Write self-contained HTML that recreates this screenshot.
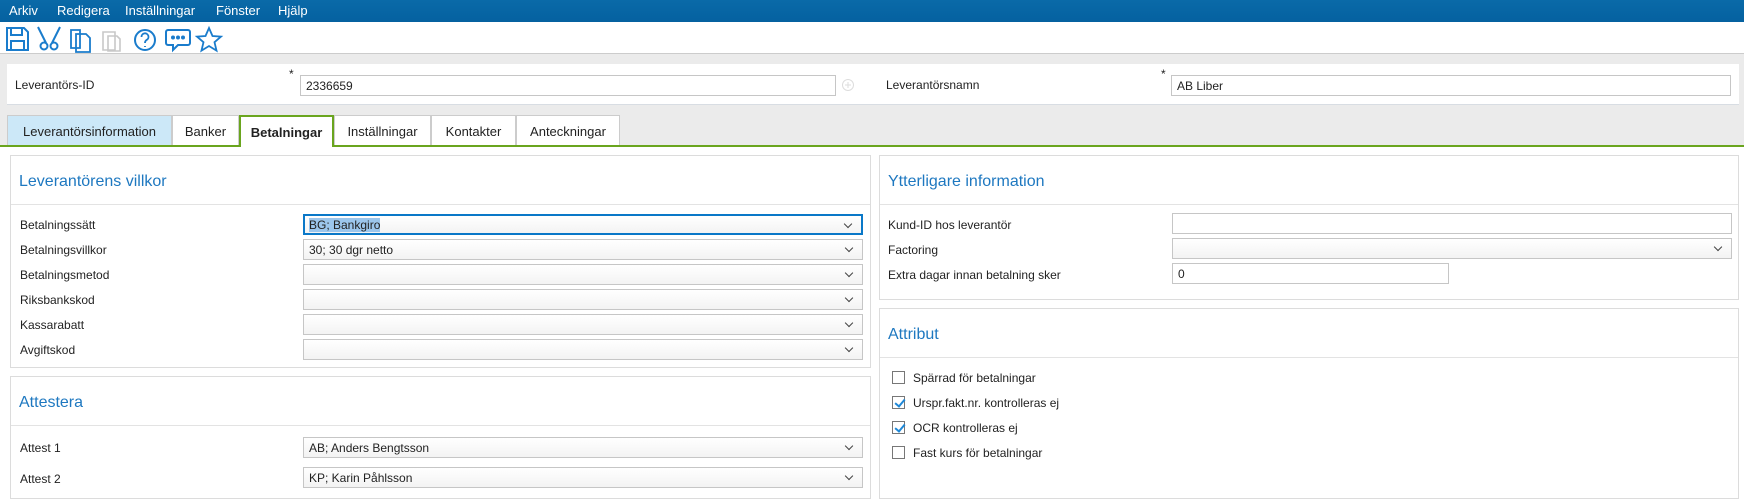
<!DOCTYPE html>
<html><head><meta charset="utf-8"><style>
*{box-sizing:border-box;margin:0;padding:0}
body{width:1744px;height:504px;overflow:hidden;background:#fff;font-family:"Liberation Sans",sans-serif;font-size:12px;color:#222;position:relative}
.a{position:absolute}
.menu{left:0;top:0;width:1744px;height:22px;background:linear-gradient(#0a6aa8,#0561a0)}
.menu span{position:absolute;top:3px;color:#fff;font-size:13px}
.tb{top:22px;left:0;width:1744px;height:32px;background:#fff;border-bottom:1px solid #ccc}
.gray{top:54px;left:0;width:1744px;height:92px;background:#ebebeb}
.hp{left:7px;top:64px;width:1732px;height:41px;background:#fff;border-bottom:1px solid #d8dde3}
.inp{position:absolute;height:21px;border:1px solid #c6c6c6;background:#fff;padding:3px 5px;font-size:12px}
.sel{position:absolute;height:21px;border:1px solid #c6c6c6;background:linear-gradient(#fff,#f3f3f3);padding:3px 5px;font-size:12px}
.sel:after{content:"";position:absolute;right:10px;top:5px;width:5px;height:5px;border-right:1.3px solid #444;border-bottom:1.3px solid #444;transform:rotate(45deg)}
.tab{position:absolute;top:115px;height:30px;border:1px solid #ccc;border-bottom:none;background:#fff;font-size:13px;padding-top:8px;text-align:center}
.panel{position:absolute;border:1px solid #dcdcdc;background:#fff}
.panel h2{position:absolute;left:8px;font-weight:normal;font-size:16px;color:#1e78c0}
.panel .div{position:absolute;left:0;right:0;height:1px;background:#e3e3e3}
.lbl{position:absolute;font-size:12px}
.cb{position:absolute;width:13px;height:13px;border:1px solid #777;background:#fff}
.cb.on:after{content:"";position:absolute;left:3.5px;top:0px;width:4px;height:8px;border-right:2px solid #1e88d8;border-bottom:2px solid #1e88d8;transform:rotate(40deg)}
</style></head><body>
<div class="a menu"><span style="left:9px">Arkiv</span><span style="left:57px">Redigera</span><span style="left:125px">Inställningar</span><span style="left:216px">Fönster</span><span style="left:278px">Hjälp</span></div>
<div class="a tb">
<svg width="240" height="32" viewBox="0 0 240 32" fill="none" stroke="#1a7ccc" stroke-width="2">
<path d="M7 6h17l4 4v18H7z"/><path d="M11 6v7h11V6M11 28v-9h13v9"/>
<circle cx="44" cy="24" r="3.5"/><circle cx="54" cy="24" r="3.5"/><path d="M46 21L38 5M52 21L60 5"/>
<path d="M71 8h9v18h-9zM76 12h10l4 4v14H76z" stroke-width="1.8"/>
<path d="M103 10h12v18h-12zM108 14h9l3 3v12h-12z" stroke="#c8c8c8" stroke-width="1.6"/>
<circle cx="145" cy="18" r="10"/><path d="M141.5 15a3.5 3.5 0 1 1 5 3c-1.5 1-1.5 2-1.5 3M145 24v1" stroke-width="1.8"/>
<path d="M168 8h20a2 2 0 0 1 2 2v11a2 2 0 0 1-2 2h-10l-5 5v-5h-5a2 2 0 0 1-2-2V10a2 2 0 0 1 2-2z"/><circle cx="173" cy="15.5" r="1" fill="#1a7ccc"/><circle cx="178" cy="15.5" r="1" fill="#1a7ccc"/><circle cx="183" cy="15.5" r="1" fill="#1a7ccc"/>
<path d="M209 6l3.5 8 8.5.6-6.5 5.6 2 8.4-7.5-4.6-7.5 4.6 2-8.4-6.5-5.6 8.5-.6z" stroke-width="1.8"/>
</svg></div>
<div class="a gray"></div>
<div class="a hp">
<div class="lbl" style="left:8px;top:14px">Leverantörs-ID</div>
<div class="lbl" style="left:282px;top:3px">*</div>
<div class="inp" style="left:293px;top:11px;width:536px">2336659</div>
<svg class="a" style="left:834px;top:14px" width="14" height="14"><circle cx="7" cy="7" r="5.5" fill="none" stroke="#ddd"/><path d="M7 4v6M4 7h6" stroke="#ddd"/></svg>
<div class="lbl" style="left:879px;top:14px">Leverantörsnamn</div>
<div class="lbl" style="left:1154px;top:3px">*</div>
<div class="inp" style="left:1164px;top:11px;width:560px">AB Liber</div>
</div>
<div class="tab" style="left:7px;width:165px;background:#cce8f8">Leverantörsinformation</div>
<div class="tab" style="left:172px;width:67px">Banker</div>
<div class="tab" style="left:239px;width:95px;border:2px solid #6aa51e;border-bottom:none;font-weight:bold;height:32px;background:#fff;z-index:2">Betalningar</div>
<div class="tab" style="left:334px;width:97px">Inställningar</div>
<div class="tab" style="left:431px;width:85px">Kontakter</div>
<div class="tab" style="left:516px;width:104px">Anteckningar</div>
<div class="a" style="left:0;top:145px;width:1744px;height:2px;background:#6aa51e"></div>
<div class="a" style="left:241px;top:145px;width:91px;height:2px;background:#fff;z-index:3"></div>

<div class="panel" style="left:10px;top:155px;width:861px;height:213px">
<h2 style="top:17px">Leverantörens villkor</h2><div class="div" style="top:48px"></div>
<div class="lbl" style="left:9px;top:62px">Betalningssätt</div>
<div class="lbl" style="left:9px;top:87px">Betalningsvillkor</div>
<div class="lbl" style="left:9px;top:112px">Betalningsmetod</div>
<div class="lbl" style="left:9px;top:137px">Riksbankskod</div>
<div class="lbl" style="left:9px;top:162px">Kassarabatt</div>
<div class="lbl" style="left:9px;top:187px">Avgiftskod</div>
<div class="sel" style="left:292px;top:58px;width:560px;border:2px solid #0a78c8;padding:2px 4px"><span style="background:#9cc6ec">BG; Bankgiro</span></div>
<div class="sel" style="left:292px;top:83px;width:560px">30; 30 dgr netto</div>
<div class="sel" style="left:292px;top:108px;width:560px"></div>
<div class="sel" style="left:292px;top:133px;width:560px"></div>
<div class="sel" style="left:292px;top:158px;width:560px"></div>
<div class="sel" style="left:292px;top:183px;width:560px"></div>
</div>
<div class="panel" style="left:10px;top:376px;width:861px;height:123px">
<h2 style="top:17px">Attestera</h2><div class="div" style="top:48px"></div>
<div class="lbl" style="left:9px;top:64px">Attest 1</div>
<div class="lbl" style="left:9px;top:95px">Attest 2</div>
<div class="sel" style="left:292px;top:60px;width:560px">AB; Anders Bengtsson</div>
<div class="sel" style="left:292px;top:90px;width:560px">KP; Karin Påhlsson</div>
</div>
<div class="panel" style="left:879px;top:155px;width:860px;height:145px">
<h2 style="top:17px">Ytterligare information</h2><div class="div" style="top:48px"></div>
<div class="lbl" style="left:8px;top:62px">Kund-ID hos leverantör</div>
<div class="lbl" style="left:8px;top:87px">Factoring</div>
<div class="lbl" style="left:8px;top:112px">Extra dagar innan betalning sker</div>
<div class="inp" style="left:292px;top:57px;width:560px"></div>
<div class="sel" style="left:292px;top:82px;width:560px"></div>
<div class="inp" style="left:292px;top:107px;width:277px">0</div>
</div>
<div class="panel" style="left:879px;top:308px;width:860px;height:191px">
<h2 style="top:17px">Attribut</h2><div class="div" style="top:48px"></div>
<div class="cb" style="left:12px;top:62px"></div><div class="lbl" style="left:33px;top:62px">Spärrad för betalningar</div>
<div class="cb on" style="left:12px;top:87px"></div><div class="lbl" style="left:33px;top:87px">Urspr.fakt.nr. kontrolleras ej</div>
<div class="cb on" style="left:12px;top:112px"></div><div class="lbl" style="left:33px;top:112px">OCR kontrolleras ej</div>
<div class="cb" style="left:12px;top:137px"></div><div class="lbl" style="left:33px;top:137px">Fast kurs för betalningar</div>
</div>
</body></html>
